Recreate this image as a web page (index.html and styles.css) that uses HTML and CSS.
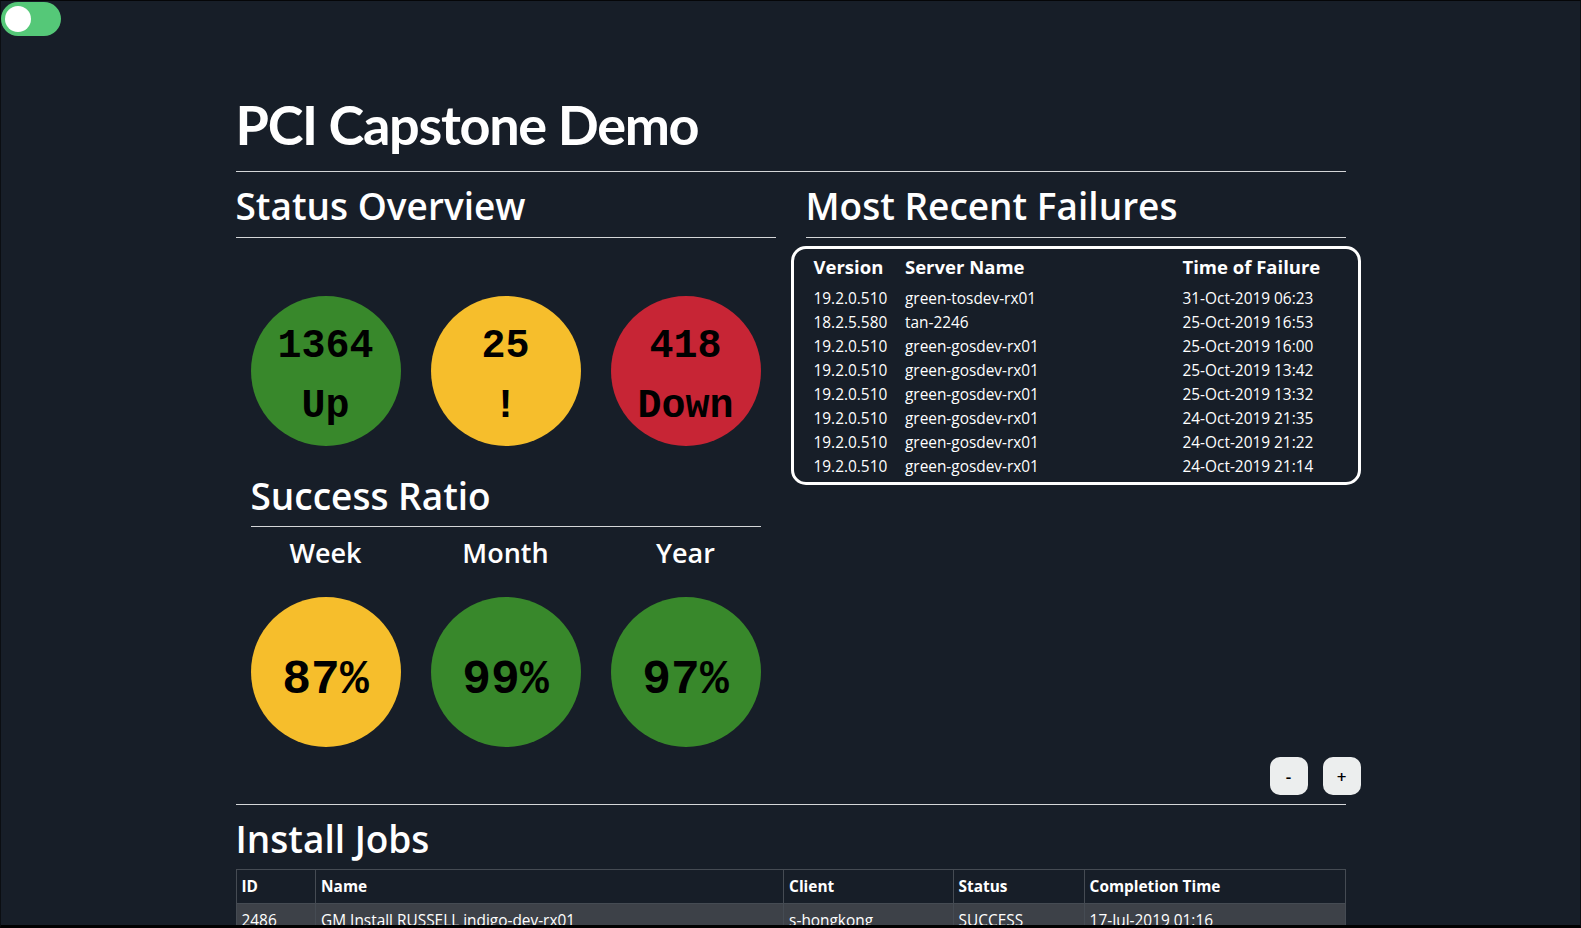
FILE: index.html
```html
<!DOCTYPE html>
<html lang="en">
<head>
<meta charset="utf-8">
<title>PCI Capstone Demo</title>
<link rel="stylesheet" href="styles.css">
</head>
<body>
<div class="frame"></div>
<div class="topbar">
  <label class="switch"><span class="knob"></span></label>
</div>
<main class="container">
  <h1 class="title">PCI Capstone Demo</h1>
  <hr class="rule rule-title">
  <div class="row">
    <section class="col">
      <h2 class="section-title">Status Overview</h2>
      <hr class="rule rule-sub">
      <div class="circles status">
        <div class="slot"><div class="circle green"><span>1364</span><span>Up</span></div></div>
        <div class="slot"><div class="circle yellow"><span>25</span><span>!</span></div></div>
        <div class="slot"><div class="circle red"><span>418</span><span>Down</span></div></div>
      </div>
      <div class="ratio-head">
        <h2 class="section-title ratio-title">Success Ratio</h2>
        <hr class="rule rule-ratio">
      </div>
      <div class="labels">
        <div class="label">Week</div>
        <div class="label">Month</div>
        <div class="label">Year</div>
      </div>
      <div class="circles ratio">
        <div class="slot"><div class="circle yellow"><span>87%</span></div></div>
        <div class="slot"><div class="circle green"><span>99%</span></div></div>
        <div class="slot"><div class="circle green"><span>97%</span></div></div>
      </div>
    </section>
    <section class="col">
      <h2 class="section-title">Most Recent Failures</h2>
      <hr class="rule rule-sub">
      <div class="fail-box">
        <table class="fail-table">
          <colgroup><col class="c-ver"><col class="c-srv"><col></colgroup>
          <thead>
            <tr><th>Version</th><th>Server Name</th><th>Time of Failure</th></tr>
          </thead>
          <tbody>
            <tr><td>19.2.0.510</td><td>green-tosdev-rx01</td><td>31-Oct-2019 06:23</td></tr>
            <tr><td>18.2.5.580</td><td>tan-2246</td><td>25-Oct-2019 16:53</td></tr>
            <tr><td>19.2.0.510</td><td>green-gosdev-rx01</td><td>25-Oct-2019 16:00</td></tr>
            <tr><td>19.2.0.510</td><td>green-gosdev-rx01</td><td>25-Oct-2019 13:42</td></tr>
            <tr><td>19.2.0.510</td><td>green-gosdev-rx01</td><td>25-Oct-2019 13:32</td></tr>
            <tr><td>19.2.0.510</td><td>green-gosdev-rx01</td><td>24-Oct-2019 21:35</td></tr>
            <tr><td>19.2.0.510</td><td>green-gosdev-rx01</td><td>24-Oct-2019 21:22</td></tr>
            <tr><td>19.2.0.510</td><td>green-gosdev-rx01</td><td>24-Oct-2019 21:14</td></tr>
          </tbody>
        </table>
      </div>
    </section>
  </div>
  <div class="zoom-controls">
    <button class="zbtn" type="button">-</button>
    <button class="zbtn" type="button">+</button>
  </div>
  <hr class="rule rule-jobs">
  <h2 class="section-title jobs-title">Install Jobs</h2>
  <table class="jobs">
    <colgroup>
      <col class="j-id"><col class="j-name"><col class="j-client"><col class="j-status"><col>
    </colgroup>
    <thead>
      <tr><th>ID</th><th>Name</th><th>Client</th><th>Status</th><th>Completion Time</th></tr>
    </thead>
    <tbody>
      <tr class="odd"><td>2486</td><td>GM Install RUSSELL indigo-dev-rx01</td><td>s-hongkong</td><td>SUCCESS</td><td>17-Jul-2019 01:16</td></tr>
      <tr><td>2485</td><td>GM Install RUSSELL indigo-dev-rx01</td><td>s-hongkong</td><td>SUCCESS</td><td>17-Jul-2019 00:58</td></tr>
    </tbody>
  </table>
</main>
</body>
</html>
```
FILE: styles.css
```css
html, body {
  margin: 0;
  padding: 0;
  height: 928px;
  overflow: hidden;
}
body {
  background: #171e28;
  color: #ffffff;
  font-family: "Open Sans", "Noto Sans", "Liberation Sans", sans-serif;
  font-size: 15.4px;
  line-height: 24px;
}
.frame {
  position: fixed;
  left: 0;
  top: 0;
  right: 0;
  bottom: 0;
  border-top: 1px solid #050608;
  border-left: 1px solid #0b0e12;
  border-right: 1px solid #0b0e12;
  border-bottom: 3px solid #000000;
  pointer-events: none;
  z-index: 10;
}
.topbar {
  height: 36px;
  padding: 2px 0 0 1px;
  box-sizing: border-box;
}
.switch {
  display: block;
  width: 60px;
  height: 34px;
  border-radius: 17px;
  background: #55c878;
  position: relative;
}
.knob {
  position: absolute;
  left: 4px;
  top: 4px;
  width: 26px;
  height: 26px;
  border-radius: 50%;
  background: #ffffff;
}
.container {
  width: 1110px;
  margin: 0 auto;
}
.title {
  margin: 57px 0 0;
  font-family: "Lato", "Open Sans", sans-serif;
  font-size: 54px;
  letter-spacing: -1.3px;
  line-height: 64px;
  font-weight: 700;
}
.rule {
  border: 0;
  border-top: 1px solid #d4d6d8;
  height: 0;
  margin: 0;
}
.rule-title { margin-top: 14px; }
.row {
  display: grid;
  grid-template-columns: 540px 540px;
  column-gap: 30px;
  align-items: start;
}
.section-title {
  margin: 11px 0 0;
  font-size: 37px;
  line-height: 46px;
  font-weight: 600;
}
.rule-sub { margin-top: 8px; }
.circles {
  display: grid;
  grid-template-columns: repeat(3, 180px);
}
.status { margin-top: 58px; }
.slot {
  display: flex;
  justify-content: center;
}
.circle {
  width: 150px;
  height: 150px;
  border-radius: 50%;
  box-sizing: border-box;
  display: flex;
  flex-direction: column;
  align-items: center;
  color: #000000;
  font-family: "Liberation Mono", "Courier New", monospace;
  font-weight: 700;
}
.status .circle {
  padding-top: 21px;
  font-size: 40px;
  line-height: 60px;
}
.ratio .circle {
  padding-top: 53px;
  font-size: 48px;
  line-height: 60px;
}
.green { background: #38882b; }
.yellow { background: #f6be2c; }
.red { background: #c72535; }
.ratio-head { margin: 0 15px; }
.ratio-title { margin-top: 27px; }
.rule-ratio { margin-top: 7px; }
.labels {
  display: grid;
  grid-template-columns: repeat(3, 180px);
  margin-top: 8px;
}
.label {
  text-align: center;
  font-size: 27px;
  line-height: 36px;
  font-weight: 600;
}
.ratio { margin-top: 26px; }
.fail-box {
  margin: 8px -15px 0;
  border: 3px solid #ffffff;
  border-radius: 15px;
  padding: 3px 0 3px 20px;
}
.fail-table {
  border-collapse: collapse;
  table-layout: fixed;
  width: 100%;
}
.c-ver { width: 91.5px; }
.c-srv { width: 277.5px; }
.fail-table th {
  text-align: left;
  font-size: 18.5px;
  line-height: 30px;
  font-weight: 700;
  padding: 0 0 5px;
  white-space: nowrap;
}
.fail-table td {
  padding: 0;
  line-height: 24px;
  white-space: nowrap;
}
.zoom-controls {
  display: flex;
  justify-content: flex-end;
  gap: 15px;
  margin: 10px -15px 0 0;
}
.zbtn {
  width: 38px;
  height: 38px;
  border: 0;
  border-radius: 10px;
  background: #eceeee;
  color: #000000;
  font-family: "Open Sans", "Liberation Sans", sans-serif;
  font-size: 17px;
  font-weight: 600;
  padding: 0;
}
.rule-jobs { margin-top: 9px; }
.jobs-title { margin-top: 11px; }
.jobs {
  margin-top: 7px;
  width: 100%;
  border-collapse: collapse;
  table-layout: fixed;
  border: 1px solid #454b53;
}
.j-id { width: 79.6px; }
.j-name { width: 468px; }
.j-client { width: 169.5px; }
.j-status { width: 131px; }
.jobs th, .jobs td {
  border: 1px solid #454b53;
  padding: 4.5px 5px;
  text-align: left;
  line-height: 24px;
  white-space: nowrap;
  overflow: hidden;
}
.jobs th { font-weight: 700; }
.jobs tr.odd td { background: #3d4148; }
```
